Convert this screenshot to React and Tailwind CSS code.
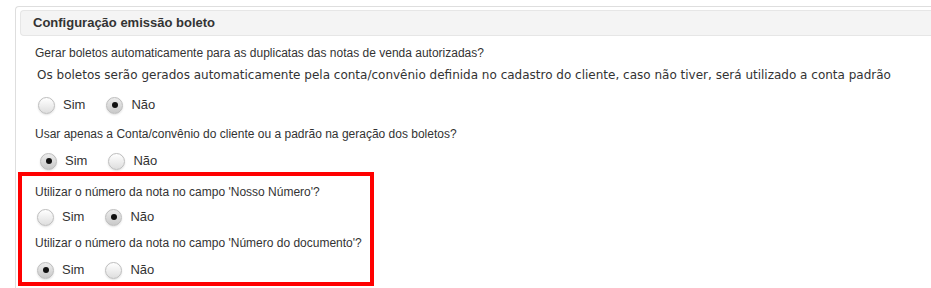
const arial = { fontFamily: '"Liberation Sans", Arial, sans-serif' }

function Radio({ checked, label, className = '' }) {
  return (
    <label className={`flex items-center gap-[8px] ${className}`}>
      <span
        className={`w-[17px] h-[17px] rounded-full border border-[#bdbdbd] flex items-center justify-center shadow-[0_1px_2px_rgba(0,0,0,0.12)] ${
          checked
            ? 'bg-[linear-gradient(#ececec,#c9c9c9)]'
            : 'bg-[linear-gradient(#ffffff,#dedede)]'
        }`}
      >
        {checked && <span className="w-[6px] h-[6px] rounded-full bg-[#111]" />}
      </span>
      <span className="text-[13px] text-[#333]">{label}</span>
    </label>
  )
}

function RadioRow({ value, className = '' }) {
  return (
    <div className={`h-[18px] flex items-center ${className}`}>
      <Radio checked={value === 'sim'} label="Sim" />
      <Radio checked={value === 'nao'} label="Não" className="ml-[21px]" />
    </div>
  )
}

export default function App() {
  return (
    <div className="w-[931px] h-[288px] bg-white overflow-hidden pt-[6px] pl-[15px]" style={arial}>
      <div className="h-[300px] border-l border-t border-[#dedede] rounded-tl-[4px] pt-[3px]">
        {/* Panel header */}
        <div className="ml-[4px] h-[26px] bg-[#f4f4f4] border border-[#e6e6e6] border-r-0 rounded-l-[4px] flex items-center pl-[12px]">
          <span className="text-[13px] font-bold text-[#333]">Configuração emissão boleto</span>
        </div>

        <div className="pl-[19px] mt-[8px] h-[18px] flex items-center text-[12px] text-[#333]">
          Gerar boletos automaticamente para as duplicatas das notas de venda autorizadas?
        </div>
        <div
          className="pl-[21px] mt-[4px] h-[18px] flex items-center text-[12px] text-[#333] whitespace-nowrap"
          style={{ fontFamily: '"DejaVu Sans", Verdana, sans-serif' }}
        >
          Os boletos serão gerados automaticamente pela conta/convênio definida no cadastro do cliente, caso não tiver, será utilizado a conta padrão
        </div>
        <RadioRow value="nao" className="mt-[12px] pl-[22px]" />

        <div className="pl-[19px] mt-[11px] h-[18px] flex items-center text-[12px] text-[#333]">
          Usar apenas a Conta/convênio do cliente ou a padrão na geração dos boletos?
        </div>
        <RadioRow value="sim" className="mt-[9px] pl-[24px]" />

        {/* Highlighted block */}
        <div className="ml-[2px] mt-[2px] w-[356px] h-[114px] border-4 border-[#ff0000] pl-[13px]">
          <div className="mt-[7px] h-[18px] flex items-center text-[12px] text-[#333]">
            Utilizar o número da nota no campo 'Nosso Número'?
          </div>
          <RadioRow value="nao" className="mt-[7px] pl-[2px]" />
          <div className="mt-[8px] h-[18px] flex items-center text-[12px] text-[#333]">
            Utilizar o número da nota no campo 'Número do documento'?
          </div>
          <RadioRow value="sim" className="mt-[9px] pl-[2px]" />
        </div>
      </div>
    </div>
  )
}
